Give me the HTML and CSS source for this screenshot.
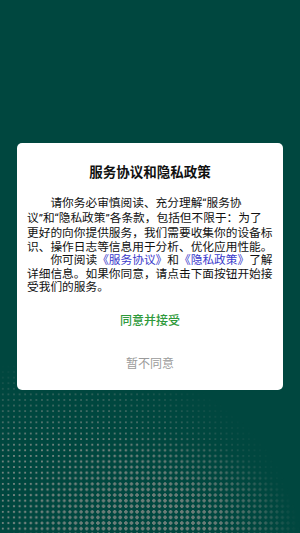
FILE: index.html
```html
<!DOCTYPE html>
<html lang="zh-CN">

<head>
    <meta charset="UTF-8">
    <meta name="viewport" content="width=device-width, initial-scale=1.0">
    <title>服务协议和隐私政策</title>
    <link rel="stylesheet" href="styles.css">
</head>

<body>
<div class="halftone"></div>
<div class="container">
    <div class="dialog">
        <h2>服务协议和隐私政策</h2>
        <div class="content">
            <p>请你务必审慎阅读、充分理解<span class="q">“</span>服务协<br>议<span class="q">”</span>和<span class="q">“</span>隐私政策<span class="q">”</span>各条款，包括但不限于：为了<br>更好的向你提供服务，我们需要收集你的设备标<br>识、操作日志等信息用于分析、优化应用性能。</p>
            <p>你可阅读<a href="#">《服务协议》</a>和<a href="#">《隐私政策》</a>了解<br>详细信息。如果你同意，请点击下面按钮开始接<br>受我们的服务。</p>
        </div>
        <button type="button" class="btn accept">同意并接受</button>
        <button type="button" class="btn reject">暂不同意</button>
    </div>
</div>
</body>

</html>
```

FILE: styles.css
```css
/* Bố cục chính */
body {
    font-family: "Noto Sans CJK SC", sans-serif;
    background-color: #00473f;
    margin: 0;
    padding: 0;
    height: 533px;
    overflow: hidden;
    position: relative;
}

/* nền chấm bi phía dưới */
.halftone {
    position: absolute;
    left: 0;
    right: 0;
    bottom: 0;
    height: 175px;
}

.halftone::before,
.halftone::after {
    content: "";
    position: absolute;
    left: 0;
    right: 0;
    bottom: 0;
    top: 0;
    background-size: 5.6px 5.6px;
}

.halftone::before {
    background-image: radial-gradient(circle, #6f837e 0.9px, transparent 1.3px);
    -webkit-mask-image: radial-gradient(ellipse 230px 175px at 22% 100%, #000 50%, transparent 100%);
    mask-image: radial-gradient(ellipse 230px 175px at 22% 100%, #000 50%, transparent 100%);
}

.halftone::after {
    background-image: radial-gradient(circle, #6c7d78 1.5px, transparent 1.9px);
    -webkit-mask-image: radial-gradient(ellipse 150px 100px at 50% 100%, #000 35%, transparent 100%);
    mask-image: radial-gradient(ellipse 150px 100px at 50% 100%, #000 35%, transparent 100%);
}

.container {
    position: relative;
    display: flex;
    justify-content: center;
    align-items: center;
    height: 533px;
}

.dialog {
    background-color: #fff;
    border-radius: 5px;
    width: 266px;
    box-sizing: border-box;
    padding: 20px 10px 8px;
}

h2 {
    margin: 0 0 16px;
    text-align: center;
    font-size: 13.5px;
    line-height: 16px;
    font-weight: 700;
    color: #111;
}

.content p {
    margin: 0;
    font-size: 11.7px;
    line-height: 13.4px;
    text-indent: 2em;
    color: #111;
    white-space: nowrap;
}

.q {
    font-family: Roboto, sans-serif;
}

.content a {
    color: #3a3acb;
    text-decoration: none;
}

.btn {
    display: block;
    width: 100%;
    height: 40px;
    padding: 0;
    border: none;
    background: none;
    font-family: "Noto Sans CJK SC", sans-serif;
    font-size: 12px;
    cursor: pointer;
}

.accept {
    margin-top: 7px;
    color: #2f9a3c;
    font-weight: 500;
}

.reject {
    margin-top: 3px;
    color: #9a9a9a;
}
```
